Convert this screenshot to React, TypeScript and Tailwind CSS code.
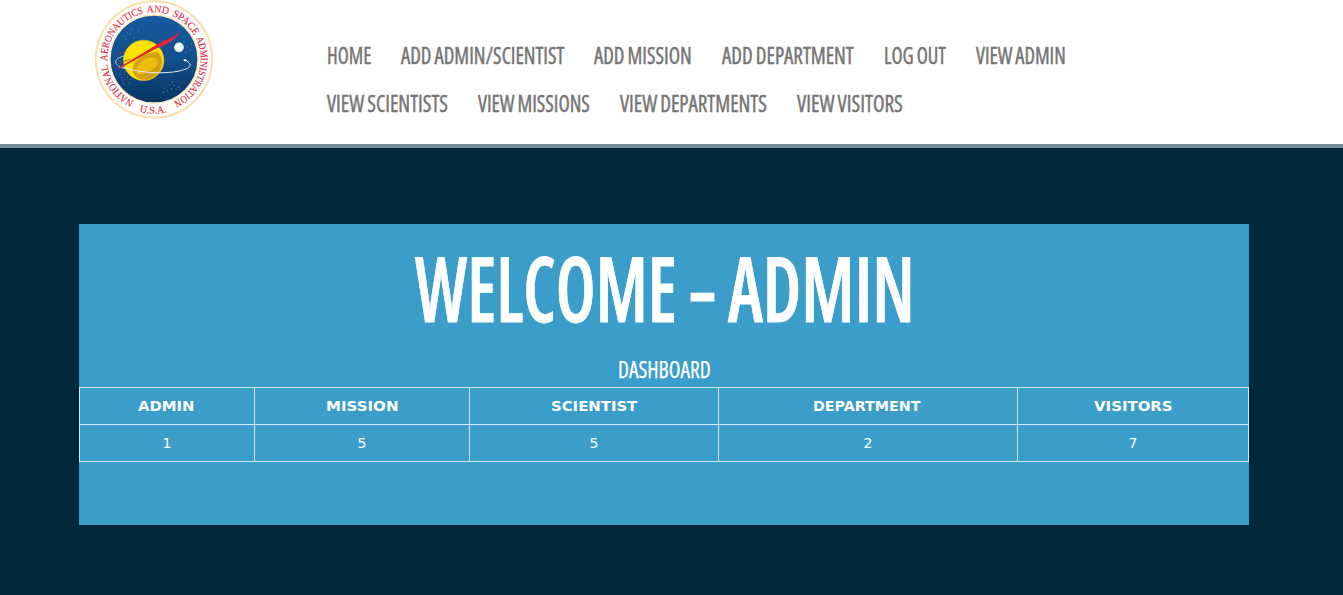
import { useLayoutEffect, useRef, useState } from 'react';

type FitTextProps = { text: string; width: number; className?: string };

/* Squeezes or widens one line of text so that it fills the given width. */
function FitText({ text, width, className = '' }: FitTextProps) {
  const ref = useRef<HTMLSpanElement>(null);
  const [scale, setScale] = useState(1);

  useLayoutEffect(() => {
    if (ref.current) setScale(width / ref.current.offsetWidth);
  }, [text, width]);

  return (
    <span className="block" style={{ width }}>
      <span
        ref={ref}
        className={`inline-block origin-left whitespace-nowrap ${className}`}
        style={{ transform: `scaleX(${scale})` }}
      >
        {text}
      </span>
    </span>
  );
}

const navRows = [
  [
    { label: 'HOME', width: 44 },
    { label: 'ADD ADMIN/SCIENTIST', width: 163 },
    { label: 'ADD MISSION', width: 98 },
    { label: 'ADD DEPARTMENT', width: 132 },
    { label: 'LOG OUT', width: 62 },
    { label: 'VIEW ADMIN', width: 90 },
  ],
  [
    { label: 'VIEW SCIENTISTS', width: 121 },
    { label: 'VIEW MISSIONS', width: 112 },
    { label: 'VIEW DEPARTMENTS', width: 147 },
    { label: 'VIEW VISITORS', width: 106 },
  ],
];

const stats = [
  { title: 'ADMIN', width: 56, value: 1 },
  { title: 'MISSION', width: 73, value: 5 },
  { title: 'SCIENTIST', width: 86, value: 5 },
  { title: 'DEPARTMENT', width: 107, value: 2 },
  { title: 'VISITORS', width: 79, value: 7 },
];

const ringWords = [
  { word: 'NATIONAL', offset: 62, length: 141 },
  { word: 'AERONAUTICS', offset: 214, length: 194 },
  { word: 'AND', offset: 418, length: 65 },
  { word: 'SPACE', offset: 495, length: 91 },
  { word: 'ADMINISTRATION', offset: 595, length: 224 },
];

const stars = [
  [118, 108], [130, 98], [142, 88], [126, 118], [150, 112], [138, 102], [164, 92],
  [300, 128], [310, 140], [318, 150], [306, 158], [322, 132], [296, 112],
  [112, 232], [122, 240], [130, 232], [136, 250], [118, 250], [140, 238], [108, 222],
  [240, 264], [250, 272], [262, 266], [270, 256], [276, 268], [238, 276], [256, 254], [284, 262], [266, 246],
];

function Seal() {
  return (
    <svg viewBox="0 0 420 372" className="h-[124px] w-[140px] shrink-0">
      <defs>
        <path id="ring" d="M210 317 A140 140 0 0 1 210 37 A140 140 0 0 1 210 317" />
        <path id="ringBottom" d="M46 177 A164 164 0 0 0 374 177" />
        <linearGradient id="sky" x1="0" y1="0" x2="0" y2="1">
          <stop offset="0" stopColor="#155b9f" />
          <stop offset="0.5" stopColor="#124f8c" />
          <stop offset="1" stopColor="#093563" />
        </linearGradient>
      </defs>
      <circle cx="210" cy="178" r="174.500" fill="#fffdfb" stroke="#fadfae" strokeWidth="6" />
      <circle cx="210" cy="177" r="132" fill="url(#sky)" stroke="#fbe6bd" strokeWidth="4" />
      <g fill="#e0263c" fontFamily="'Liberation Serif', serif" fontSize="31" stroke="#e0263c" strokeWidth="0.3">
        {ringWords.map((w) => (
          <text key={w.word} textLength={w.length} lengthAdjust="spacingAndGlyphs">
            <textPath href="#ring" startOffset={w.offset} textLength={w.length} lengthAdjust="spacingAndGlyphs">
              {w.word}
            </textPath>
          </text>
        ))}
        <text textLength="84">
          <textPath href="#ringBottom" startOffset="213" textLength="84">
            U.S.A.
          </textPath>
        </text>
      </g>
      <g fill="#6f9bc6">
        {stars.map(([x, y]) => (
          <circle key={`${x}-${y}`} cx={x} cy={y} r="1.6" />
        ))}
      </g>
      <path d="M122 168 C96 172 86 188 104 198 C118 206 136 211 160 214" fill="none" stroke="#a9c5e2" strokeWidth="3" />
      <path d="M102 162 C108 157 116 156 124 157" fill="none" stroke="#b52a44" strokeWidth="3" />
      <circle cx="179" cy="181" r="60.500" fill="#ffe100" stroke="#e8c51b" strokeWidth="2" />
      <path
        d="M146 207 C148 178 184 158 220 156 C236 170 238 190 227 212 C216 232 196 241 174 239 C156 234 145 224 146 207Z"
        fill="#d3a015"
      />
      <path
        d="M158 207 C162 183 194 167 216 174 C229 185 216 207 196 213 C180 217 170 226 160 222 Z"
        fill="#eebd0c"
      />
      <path d="M116 201 C160 219 240 223 286 213 C322 205 329 193 301 179" fill="none" stroke="#e3eaf3" strokeWidth="3" />
      <ellipse cx="303" cy="181" rx="4.500" ry="3" fill="#ffffff" />
      <path d="M216 136 C224 124 261 120 291 92 C275 119 248 135 215 146 L104 207 L102 204 Z" fill="#df2438" />
      <path d="M102 192 C114 186 126 181 138 178" fill="none" stroke="#c22a45" strokeWidth="2.500" />
      <circle cx="285" cy="142" r="14.500" fill="#f4f7f9" />
      <path d="M272 148 A14.500 14.500 0 0 0 298 149 A18 18 0 0 1 272 148" fill="#bac8d3" />
    </svg>
  );
}

export default function App() {
  return (
    <div className="h-[595px] overflow-hidden bg-[#00283a] font-['Open_Sans','Noto_Sans',sans-serif]">
      <header className="flex h-[148px] border-b-4 border-[#778b96] bg-white pl-[84px]">
        <Seal />
        <nav className="ml-[103px] pt-[31px] text-2xl leading-[48px] text-[#757575] [-webkit-text-stroke:0.45px_#757575] [font-stretch:75%] [word-spacing:-0.04em]">
          {navRows.map((row) => (
            <ul key={row[0].label} className="flex gap-[30px]">
              {row.map((item) => (
                <li key={item.label}>
                  <a href="#">
                    <FitText text={item.label} width={item.width} />
                  </a>
                </li>
              ))}
            </ul>
          ))}
        </nav>
      </header>

      <main className="ml-[79px] mt-[76px] h-[301px] w-[1170px] bg-[#3b9dca] text-white">
        <h1 className="flex h-[132px] justify-center gap-3 pl-[2px] text-[90px] font-semibold leading-[126px] [-webkit-text-stroke:0.8px_white] [font-stretch:75%]">
          <FitText text="WELCOME" width={262} />
          <FitText text="–" width={27} />
          <FitText text="ADMIN" width={187} />
        </h1>
        <h2 className="flex h-[31px] justify-center text-2xl leading-[26px] [-webkit-text-stroke:0.25px_white] [font-stretch:75%]">
          <FitText text="DASHBOARD" width={93} />
        </h2>
        <div className="grid grid-cols-[175px_215px_249px_299px_231px] border-l border-t border-[#d6e8f1] text-center font-['DejaVu_Sans',sans-serif] text-sm">
          {stats.map((s) => (
            <div key={s.title} className="flex h-[37px] items-center justify-center border-b border-r border-[#d6e8f1] pr-[4px] font-bold">
              <FitText text={s.title} width={s.width} />
            </div>
          ))}
          {stats.map((s) => (
            <div key={s.title} className="flex h-[37px] items-center justify-center border-b border-r border-[#d6e8f1]">
              {s.value}
            </div>
          ))}
        </div>
      </main>
    </div>
  );
}
